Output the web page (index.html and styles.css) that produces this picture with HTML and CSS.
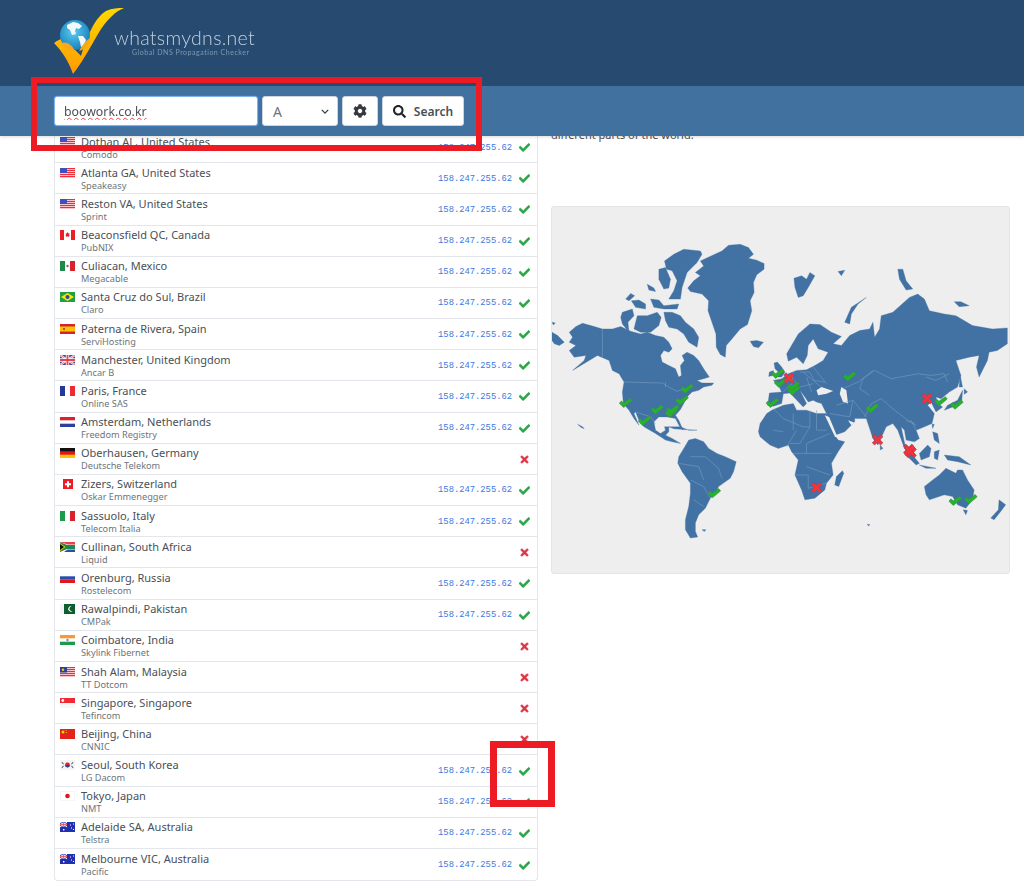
FILE: index.html
```html
<!DOCTYPE html>
<html lang="en">
<head>
<meta charset="utf-8">
<title>whatsmydns.net</title>
<link rel="stylesheet" href="styles.css">
</head>
<body>
<svg class="defs" width="0" height="0" aria-hidden="true">
  <defs>
    <symbol id="check" viewBox="0 0 512 512"><path d="M173.898 439.404l-166.4-166.4c-9.997-9.997-9.997-26.206 0-36.204l36.203-36.204c9.997-9.998 26.207-9.998 36.204 0L192 312.69 432.095 72.596c9.997-9.997 26.207-9.997 36.204 0l36.203 36.204c9.997 9.997 9.997 26.206 0 36.204l-294.4 294.401c-9.998 9.997-26.207 9.997-36.204-.001z"/></symbol>
    <symbol id="times" viewBox="0 0 352 512"><path d="M242.72 256l100.07-100.07c12.28-12.28 12.28-32.19 0-44.48l-22.24-22.24c-12.28-12.28-32.19-12.28-44.48 0L176 189.28 75.93 89.21c-12.28-12.28-32.19-12.28-44.48 0L9.21 111.45c-12.28 12.28-12.28 32.19 0 44.48L109.28 256 9.21 356.07c-12.28 12.28-12.28 32.19 0 44.48l22.24 22.24c12.28 12.28 32.2 12.28 44.48 0L176 322.72l100.07 100.07c12.28 12.28 32.2 12.28 44.48 0l22.24-22.24c12.28-12.28 12.28-32.19 0-44.48L242.72 256z"/></symbol>
    <symbol id="f-us" viewBox="0 0 15 10"><rect width="15" height="10" fill="#fbc4c6"/><path d="M0 0h15v1.1H0zM0 2h15v1.1H0zM0 4h15v1.1H0zM0 6h15v1.1H0zM0 8h15v1.1H0z" fill="#ec2f3a"/><rect width="7" height="5" fill="#3d50c0"/></symbol>
    <symbol id="f-ca" viewBox="0 0 15 10"><rect width="15" height="10" fill="#fff"/><rect width="4" height="10" fill="#ee1c25"/><rect x="11" width="4" height="10" fill="#ee1c25"/><path d="M7.5 2l1 1.6 1-.3-.4 2 .9.3-1.3 1.2-1.1-.2-1.1.2-1.3-1.2.9-.3-.4-2 1 .3z" fill="#ee1c25"/></symbol>
    <symbol id="f-mx" viewBox="0 0 15 10"><rect width="15" height="10" fill="#fff"/><rect width="5" height="10" fill="#1d8a4a"/><rect x="10" width="5" height="10" fill="#d8232e"/><circle cx="7.5" cy="5" r="1.2" fill="#8b6b4a"/></symbol>
    <symbol id="f-br" viewBox="0 0 15 10"><rect width="15" height="10" fill="#229e45"/><path d="M7.5 1L14 5 7.5 9 1 5z" fill="#f8e509"/><circle cx="7.5" cy="5" r="2" fill="#2b49a3"/></symbol>
    <symbol id="f-es" viewBox="0 0 15 10"><rect width="15" height="10" fill="#d8232e"/><rect y="2.5" width="15" height="5" fill="#fbc400"/><rect x="3" y="4" width="2" height="2" fill="#b0552a"/></symbol>
    <symbol id="f-gb" viewBox="0 0 15 10"><rect width="15" height="10" fill="#3a4a9c"/><path d="M0 0l15 10M15 0L0 10" stroke="#fff" stroke-width="2"/><path d="M0 0l15 10M15 0L0 10" stroke="#e8434c" stroke-width=".7"/><path d="M7.5 0v10M0 5h15" stroke="#fff" stroke-width="3.4"/><path d="M7.5 0v10M0 5h15" stroke="#e8434c" stroke-width="1.8"/></symbol>
    <symbol id="f-fr" viewBox="0 0 15 10"><rect width="15" height="10" fill="#fff"/><rect width="5" height="10" fill="#26379b"/><rect x="10" width="5" height="10" fill="#ee2a35"/></symbol>
    <symbol id="f-nl" viewBox="0 0 15 10"><rect width="15" height="10" fill="#fff"/><rect width="15" height="3.3" fill="#d8232e"/><rect y="6.7" width="15" height="3.3" fill="#2b3f9c"/></symbol>
    <symbol id="f-de" viewBox="0 0 15 10"><rect width="15" height="10" fill="#e2171d"/><rect width="15" height="3.3" fill="#111"/><rect y="6.7" width="15" height="3.3" fill="#fbc400"/></symbol>
    <symbol id="f-ch" viewBox="0 0 15 10"><rect x="3" width="10" height="10" fill="#ee1c25"/><path d="M7 2.2h2v2h2v2H9v2H7v-2H5v-2h2z" fill="#fff"/></symbol>
    <symbol id="f-it" viewBox="0 0 15 10"><rect width="15" height="10" fill="#fff"/><rect width="5" height="10" fill="#1d9a4a"/><rect x="10" width="5" height="10" fill="#d8232e"/></symbol>
    <symbol id="f-za" viewBox="0 0 15 10"><rect width="15" height="10" fill="#1d8a4a"/><path d="M0 0h15v3H7zM0 10h15V7H7z" fill="#fff"/><path d="M0 0h15v2.4H7.5z" fill="#e8434c"/><path d="M7.5 7.6H15V10H4z" fill="#2b4fb0"/><path d="M0 1l5.5 4L0 9z" fill="#fbc400"/><path d="M0 2l4 3-4 3z" fill="#111"/></symbol>
    <symbol id="f-ru" viewBox="0 0 15 10"><rect width="15" height="10" fill="#fff" stroke="#eee" stroke-width=".5"/><rect y="3.3" width="15" height="3.4" fill="#2b4fb0"/><rect y="6.7" width="15" height="3.3" fill="#e2171d"/></symbol>
    <symbol id="f-pk" viewBox="0 0 15 10"><rect width="15" height="10" fill="#f4f4f4"/><rect x="4" width="11" height="10" fill="#0b5e2e"/><path d="M11.8 2.6a2.6 2.6 0 1 0 .8 4.2 2.2 2.2 0 1 1-.8-4.2z" fill="#fff"/></symbol>
    <symbol id="f-in" viewBox="0 0 15 10"><rect width="15" height="10" fill="#fff"/><rect width="15" height="3.3" fill="#f79a33"/><rect y="6.7" width="15" height="3.3" fill="#1d9a4a"/><circle cx="7.5" cy="5" r="1.2" fill="#7a86c8"/></symbol>
    <symbol id="f-my" viewBox="0 0 15 10"><rect width="15" height="10" fill="#fbc4c6"/><path d="M0 0h15v1.1H0zM0 2h15v1.1H0zM0 4h15v1.1H0zM0 6h15v1.1H0zM0 8h15v1.1H0z" fill="#ec2f3a"/><rect width="7" height="5.5" fill="#2b3f9c"/><circle cx="3" cy="2.7" r="1.3" fill="#fbc400"/></symbol>
    <symbol id="f-sg" viewBox="0 0 15 10"><rect width="15" height="10" fill="#f7f7f7"/><rect width="15" height="5" fill="#ee2a35"/><circle cx="2.8" cy="2.5" r="1.4" fill="#fff"/></symbol>
    <symbol id="f-cn" viewBox="0 0 15 10"><rect width="15" height="10" fill="#e2231a"/><circle cx="3" cy="3" r="1.5" fill="#fbd400"/><circle cx="6" cy="1.5" r=".5" fill="#fbd400"/><circle cx="6.5" cy="3.5" r=".5" fill="#fbd400"/></symbol>
    <symbol id="f-kr" viewBox="0 0 15 10"><rect width="15" height="10" fill="#f4f4f4"/><circle cx="7.5" cy="5" r="2.4" fill="#d8232e"/><path d="M5.1 5a2.4 2.4 0 0 0 4.8 0z" fill="#2b3f9c"/><path d="M2 2.2l1.5 2M13 2.2l-1.5 2M2 7.8l1.5-2M13 7.8l-1.5-2" stroke="#333" stroke-width="1"/></symbol>
    <symbol id="f-jp" viewBox="0 0 15 10"><rect width="15" height="10" fill="#ececec"/><rect x=".5" y=".5" width="14" height="9" fill="#fff"/><circle cx="7.5" cy="5" r="2.3" fill="#e2171d"/></symbol>
    <symbol id="f-au" viewBox="0 0 15 10"><rect width="15" height="10" fill="#1f2fb0"/><path d="M0 0l7 5M7 0L0 5" stroke="#fff" stroke-width="1"/><path d="M3.5 0v5M0 2.5h7" stroke="#fff" stroke-width="1.6"/><path d="M3.5 0v5M0 2.5h7" stroke="#e8434c" stroke-width=".8"/><path d="M10 2.5h1v1h-1zM13 1.5h1v1h-1zM13 7h1v1h-1zM11 5.5h1v1h-1zM3 7h1.4v1.4H3z" fill="#fff"/></symbol>
    <symbol id="mark-ok" viewBox="0 0 42 32"><path d="M2 17l6-7 7 6L34 2l6 7-25 21z" fill="#20b52b" stroke="#4a8a48" stroke-width="2" stroke-linejoin="round"/></symbol>
    <symbol id="mark-no" viewBox="0 0 36 36"><path d="M9 2l9 9 9-9 7 7-9 9 9 9-7 7-9-9-9 9-7-7 9-9-9-9z" fill="#f5333a" stroke="#8c4a66" stroke-width="2" stroke-linejoin="round"/></symbol>
  </defs>
</svg>

<header class="top">
  <div class="brand">
    <svg class="logo" viewBox="0 0 70 67" aria-hidden="true">
      <defs>
        <linearGradient id="lg-y" x1="0" y1="0" x2="0" y2="1"><stop offset="0" stop-color="#ffd800"/><stop offset="1" stop-color="#ff9a00"/></linearGradient>
        <radialGradient id="lg-b" cx=".45" cy=".4" r=".65"><stop offset="0" stop-color="#5ccbf0"/><stop offset="1" stop-color="#117cb8"/></radialGradient>
      </defs>
      <path d="M19 66C15 54 8 43 0 35c4-3 8-5 11-4 5 7 13 13 16 17C32 32 40 10 52 3c6-3 12-3 18-3-8 3-18 12-26 26C36 40 27 56 19 66z" fill="url(#lg-y)"/>
      <circle cx="21" cy="27" r="15" fill="url(#lg-b)"/>
      <path d="M13 17l6-3 5 1 4 3-3 3-3-1-1 3 1 3-4 1-2-5-3-2zM24 28l5 0 3 4-2 5-3 2-1-5z" fill="#f3f8fb"/>
      <path d="M7 35c5-2 11 1 14 8-6 0-11-3-14-8zM36 30c0 6-6 12-11 13 3-5 6-10 11-13z" fill="#f9a61a"/>
    </svg>
    <div class="brand-text">
      <div class="brand-name">whatsmydns.net</div>
      <div class="brand-sub">Global DNS Propagation Checker</div>
    </div>
  </div>
  <form class="search">
    <input class="field" type="text" value="boowork.co.kr" spellcheck="false">
    <div class="type">A<svg class="chev" viewBox="0 0 10 6" aria-hidden="true"><path d="M1 1l4 4 4-4" fill="none" stroke="#343a40" stroke-width="1.6"/></svg></div>
    <button class="btn gear" type="button" aria-label="Settings"><svg class="ico" viewBox="0 0 512 512"><path d="M487.4 315.7l-42.6-24.6c4.3-23.2 4.3-47 0-70.2l42.6-24.6c4.9-2.8 7.1-8.6 5.5-14-11.1-35.6-30-67.8-54.7-94.6-3.8-4.1-10-5.1-14.8-2.3L380.8 110c-17.9-15.4-38.5-27.3-60.8-35.1V25.8c0-5.6-3.9-10.5-9.4-11.7-36.7-8.2-74.3-7.8-109.2 0-5.5 1.2-9.4 6.1-9.4 11.7V75c-22.2 7.9-42.8 19.8-60.8 35.1L88.7 85.5c-4.9-2.8-11-1.9-14.8 2.3-24.7 26.7-43.6 58.9-54.7 94.6-1.7 5.4.6 11.2 5.5 14L67.3 221c-4.3 23.2-4.3 47 0 70.2l-42.6 24.6c-4.9 2.8-7.1 8.6-5.5 14 11.1 35.6 30 67.8 54.7 94.6 3.8 4.1 10 5.1 14.8 2.3l42.6-24.6c17.9 15.4 38.5 27.3 60.8 35.1v49.2c0 5.6 3.9 10.5 9.4 11.7 36.7 8.2 74.3 7.8 109.2 0 5.5-1.2 9.4-6.1 9.4-11.7v-49.2c22.2-7.9 42.8-19.8 60.8-35.1l42.6 24.6c4.9 2.8 11 1.9 14.8-2.3 24.7-26.7 43.6-58.9 54.7-94.6 1.5-5.5-.7-11.3-5.6-14.1zM256 336c-44.1 0-80-35.9-80-80s35.9-80 80-80 80 35.9 80 80-35.9 80-80 80z"/></svg></button>
    <button class="btn go" type="button"><svg class="ico" viewBox="0 0 512 512"><path d="M505 442.7L405.3 343c-4.5-4.5-10.6-7-17-7H372c27.6-35.3 44-79.7 44-128C416 93.1 322.9 0 208 0S0 93.1 0 208s93.1 208 208 208c48.3 0 92.7-16.4 128-44v16.3c0 6.4 2.5 12.5 7 17l99.7 99.7c9.4 9.4 24.6 9.4 33.9 0l28.3-28.3c9.4-9.4 9.4-24.6.1-34zM208 336c-70.7 0-128-57.2-128-128 0-70.7 57.2-128 128-128 70.7 0 128 57.2 128 128 0 70.7-57.2 128-128 128z"/></svg>Search</button>
  </form>
</header>

<main class="page">
  <ul class="results">
    <li class="row"><svg class="flag"><use href="#f-us"/></svg><div class="place"><div class="city">Dothan AL, United States</div><div class="isp">Comodo</div></div><span class="ip">158.247.255.62</span><svg class="st ok"><use href="#check"/></svg></li>
    <li class="row"><svg class="flag"><use href="#f-us"/></svg><div class="place"><div class="city">Atlanta GA, United States</div><div class="isp">Speakeasy</div></div><span class="ip">158.247.255.62</span><svg class="st ok"><use href="#check"/></svg></li>
    <li class="row"><svg class="flag"><use href="#f-us"/></svg><div class="place"><div class="city">Reston VA, United States</div><div class="isp">Sprint</div></div><span class="ip">158.247.255.62</span><svg class="st ok"><use href="#check"/></svg></li>
    <li class="row"><svg class="flag"><use href="#f-ca"/></svg><div class="place"><div class="city">Beaconsfield QC, Canada</div><div class="isp">PubNIX</div></div><span class="ip">158.247.255.62</span><svg class="st ok"><use href="#check"/></svg></li>
    <li class="row"><svg class="flag"><use href="#f-mx"/></svg><div class="place"><div class="city">Culiacan, Mexico</div><div class="isp">Megacable</div></div><span class="ip">158.247.255.62</span><svg class="st ok"><use href="#check"/></svg></li>
    <li class="row"><svg class="flag"><use href="#f-br"/></svg><div class="place"><div class="city">Santa Cruz do Sul, Brazil</div><div class="isp">Claro</div></div><span class="ip">158.247.255.62</span><svg class="st ok"><use href="#check"/></svg></li>
    <li class="row"><svg class="flag"><use href="#f-es"/></svg><div class="place"><div class="city">Paterna de Rivera, Spain</div><div class="isp">ServiHosting</div></div><span class="ip">158.247.255.62</span><svg class="st ok"><use href="#check"/></svg></li>
    <li class="row"><svg class="flag"><use href="#f-gb"/></svg><div class="place"><div class="city">Manchester, United Kingdom</div><div class="isp">Ancar B</div></div><span class="ip">158.247.255.62</span><svg class="st ok"><use href="#check"/></svg></li>
    <li class="row"><svg class="flag"><use href="#f-fr"/></svg><div class="place"><div class="city">Paris, France</div><div class="isp">Online SAS</div></div><span class="ip">158.247.255.62</span><svg class="st ok"><use href="#check"/></svg></li>
    <li class="row"><svg class="flag"><use href="#f-nl"/></svg><div class="place"><div class="city">Amsterdam, Netherlands</div><div class="isp">Freedom Registry</div></div><span class="ip">158.247.255.62</span><svg class="st ok"><use href="#check"/></svg></li>
    <li class="row"><svg class="flag"><use href="#f-de"/></svg><div class="place"><div class="city">Oberhausen, Germany</div><div class="isp">Deutsche Telekom</div></div><svg class="st no"><use href="#times"/></svg></li>
    <li class="row"><svg class="flag"><use href="#f-ch"/></svg><div class="place"><div class="city">Zizers, Switzerland</div><div class="isp">Oskar Emmenegger</div></div><span class="ip">158.247.255.62</span><svg class="st ok"><use href="#check"/></svg></li>
    <li class="row"><svg class="flag"><use href="#f-it"/></svg><div class="place"><div class="city">Sassuolo, Italy</div><div class="isp">Telecom Italia</div></div><span class="ip">158.247.255.62</span><svg class="st ok"><use href="#check"/></svg></li>
    <li class="row"><svg class="flag"><use href="#f-za"/></svg><div class="place"><div class="city">Cullinan, South Africa</div><div class="isp">Liquid</div></div><svg class="st no"><use href="#times"/></svg></li>
    <li class="row"><svg class="flag"><use href="#f-ru"/></svg><div class="place"><div class="city">Orenburg, Russia</div><div class="isp">Rostelecom</div></div><span class="ip">158.247.255.62</span><svg class="st ok"><use href="#check"/></svg></li>
    <li class="row"><svg class="flag"><use href="#f-pk"/></svg><div class="place"><div class="city">Rawalpindi, Pakistan</div><div class="isp">CMPak</div></div><span class="ip">158.247.255.62</span><svg class="st ok"><use href="#check"/></svg></li>
    <li class="row"><svg class="flag"><use href="#f-in"/></svg><div class="place"><div class="city">Coimbatore, India</div><div class="isp">Skylink Fibernet</div></div><svg class="st no"><use href="#times"/></svg></li>
    <li class="row"><svg class="flag"><use href="#f-my"/></svg><div class="place"><div class="city">Shah Alam, Malaysia</div><div class="isp">TT Dotcom</div></div><svg class="st no"><use href="#times"/></svg></li>
    <li class="row"><svg class="flag"><use href="#f-sg"/></svg><div class="place"><div class="city">Singapore, Singapore</div><div class="isp">Tefincom</div></div><svg class="st no"><use href="#times"/></svg></li>
    <li class="row"><svg class="flag"><use href="#f-cn"/></svg><div class="place"><div class="city">Beijing, China</div><div class="isp">CNNIC</div></div><svg class="st no"><use href="#times"/></svg></li>
    <li class="row"><svg class="flag"><use href="#f-kr"/></svg><div class="place"><div class="city">Seoul, South Korea</div><div class="isp">LG Dacom</div></div><span class="ip">158.247.255.62</span><svg class="st ok"><use href="#check"/></svg></li>
    <li class="row"><svg class="flag"><use href="#f-jp"/></svg><div class="place"><div class="city">Tokyo, Japan</div><div class="isp">NMT</div></div><span class="ip">158.247.255.62</span><svg class="st ok"><use href="#check"/></svg></li>
    <li class="row"><svg class="flag"><use href="#f-au"/></svg><div class="place"><div class="city">Adelaide SA, Australia</div><div class="isp">Telstra</div></div><span class="ip">158.247.255.62</span><svg class="st ok"><use href="#check"/></svg></li>
    <li class="row"><svg class="flag"><use href="#f-au"/></svg><div class="place"><div class="city">Melbourne VIC, Australia</div><div class="isp">Pacific</div></div><span class="ip">158.247.255.62</span><svg class="st ok"><use href="#check"/></svg></li>
  </ul>
  <section class="side">
    <p class="intro">different parts of the world.</p>
    <div class="map-panel">
      <svg class="map" viewBox="33 18 1377 1102" aria-label="World map">
        <g class="land">
          <polygon points="545,150 565,133 600,130 625,140 640,160 625,172 650,178 672,188 672,205 650,222 640,245 642,275 630,300 635,330 622,372 600,385 575,415 558,435 555,470 540,462 528,440 527,400 515,365 503,330 505,300 485,280 450,272 442,262 460,240 480,225 465,215 490,195 480,180"/>
          <polygon points="85,395 105,378 125,368 150,375 185,385 215,385 240,378 270,392 300,400 320,395 345,405 370,410 385,425 395,445 385,455 370,450 360,465 365,485 385,495 405,505 415,530 423,525 420,495 432,480 425,465 440,455 460,465 475,480 490,505 507,530 490,535 470,540 485,548 520,548 515,555 490,560 475,570 455,575 440,590 430,610 420,628 405,645 415,660 428,690 418,680 405,655 380,650 355,650 340,665 345,690 360,700 375,690 372,680 385,680 385,695 375,705 395,715 420,730 410,728 395,725 375,720 345,700 310,680 295,660 285,635 280,640 295,675 280,655 265,630 248,610 245,575 250,545 235,520 215,510 205,480 170,465 145,480 95,510 130,480 135,465 100,470 85,450 105,435 85,425 95,410"/>
          <polygon points="33,395 50,405 70,425 55,435 40,430 33,420"/>
          <polygon points="33,365 43,367 37,373"/>
          <polygon points="245,335 275,325 280,345 262,365 265,395 245,370 240,350"/>
          <polygon points="255,295 270,278 282,285 265,300"/>
          <polygon points="272,300 295,298 315,310 315,325 285,320"/>
          <polygon points="320,250 340,262 345,272 325,268"/>
          <polygon points="330,295 355,298 370,315 415,310 410,325 370,325 340,320"/>
          <polygon points="355,205 375,200 390,235 385,262 370,265 355,235"/>
          <polygon points="372,180 400,160 430,145 480,150 485,160 470,185 440,215 425,260 420,295 385,295 400,270 410,240 395,210 378,205"/>
          <polygon points="370,335 395,335 420,345 435,365 460,385 475,410 470,440 445,425 430,400 410,385 385,380 375,360"/>
          <polygon points="290,345 320,345 350,335 362,350 355,375 330,395 300,395 280,385"/>
          <polygon points="415,770 430,745 445,720 465,715 490,725 505,745 530,760 555,770 588,785 580,815 570,835 535,860 525,880 510,895 495,925 475,945 465,970 465,995 472,1012 450,1015 435,990 435,960 445,920 450,880 450,850 425,815 412,790"/>
          <polygon points="385,680 420,680 445,690 470,690 430,688 400,686"/>
          <polygon points="660,670 680,640 695,630 730,615 760,610 770,630 800,630 830,640 860,640 880,695 895,720 915,725 895,755 875,790 880,825 860,850 855,870 825,895 795,900 785,870 765,825 775,780 755,755 745,735 715,745 690,735 660,710 655,695"/>
          <polygon points="908,812 912,820 897,860 885,855 890,830"/>
          <polygon points="683,615 688,578 725,575 715,555 700,540 725,535 745,520 770,510 800,508 825,495 850,480 865,455 835,445 820,415 805,435 802,465 790,490 770,470 745,482 740,460 775,400 810,370 840,372 875,395 905,408 880,430 905,435 930,405 960,390 990,385 1000,365 1005,410 1020,385 1025,345 1060,335 1110,290 1135,280 1155,295 1170,330 1215,340 1250,345 1300,375 1360,385 1405,382 1405,430 1375,450 1350,455 1345,480 1320,530 1312,500 1320,465 1290,470 1250,480 1265,525 1255,560 1230,575 1205,595 1190,590 1195,610 1210,620 1190,635 1175,605 1165,615 1185,640 1178,670 1155,680 1130,690 1140,715 1125,725 1100,720 1095,690 1085,680 1100,750 1115,765 1095,745 1075,690 1060,670 1040,680 1015,735 1000,715 980,655 945,655 945,665 915,695 885,705 860,640 845,610 830,605 820,600 805,605 795,590 780,570 800,610 790,620 750,578 730,580 725,610 700,618"/>
          <polygon points="915,365 935,320 980,290 955,310 935,340 930,370"/>
          <polygon points="1075,205 1090,205 1100,240 1120,265 1100,268 1080,235"/>
          <polygon points="762,232 785,225 800,235 810,215 825,225 805,260 790,285 775,290 765,260"/>
          <polygon points="895,212 915,208 905,225"/>
          <polygon points="630,422 650,420 670,425 655,442 640,438"/>
          <polygon points="1245,303 1265,303 1290,315 1260,318"/>
          <polygon points="702,488 712,485 725,500 735,515 725,530 705,530 715,515 705,505"/>
          <polygon points="688,515 700,510 698,525 686,528"/>
          <polygon points="1262,520 1270,560 1260,560"/>
          <polygon points="1270,570 1268,600 1240,620 1215,630 1225,615 1255,600"/>
          <polygon points="1275,565 1285,575 1275,582"/>
          <polygon points="1095,738 1115,760 1140,790 1130,795 1105,770"/>
          <polygon points="1140,795 1190,805 1160,805"/>
          <polygon points="1140,760 1165,735 1175,745 1170,770 1145,780"/>
          <polygon points="1185,755 1200,750 1195,780 1185,775"/>
          <polygon points="1215,765 1260,770 1295,795 1255,785 1225,780"/>
          <polygon points="1180,695 1195,700 1200,730 1185,720"/>
          <polygon points="1178,672 1185,672 1180,685"/>
          <polygon points="1022,735 1030,745 1022,750"/>
          <polygon points="1155,860 1180,840 1200,825 1220,805 1250,820 1255,810 1270,810 1285,840 1305,870 1300,900 1280,925 1255,915 1240,890 1215,885 1170,900 1160,885"/>
          <polygon points="1272,930 1285,932 1280,945"/>
          <polygon points="1380,900 1400,915 1385,935 1365,960 1355,955 1378,930"/>
          <polygon points="485,990 497,990 492,995"/>
          <polygon points="982,974 990,974 988,979"/>
          <polygon points="110,672 125,680 130,686 120,681"/>
        </g>
        <g class="lakes">
          <polygon points="830,570 845,560 880,572 860,580 835,585"/>
          <polygon points="905,560 920,570 925,610 910,605 900,580"/>
          <polygon points="855,645 868,650 895,715 885,708"/>
          <polygon points="925,660 945,668 935,675"/>
        </g>
        <path class="borders" d="M185 385v85M250 545l115 3 25 15 20 10 30-10M285 635l45 15 15 20M375 560v-15M700 625l30 30 60 25 20 0 0-50M830 630l0 60 30 0M810 680l-30 50-30 0M770 690l-30 50M870 700l-70 30 0 30-40 0M800 760l75 0M765 825l40 0 0 40M800 800l70 25M805 865l55-15M760 640l0 50M700 690l30 5M450 770l45 0 40 35 10 30M450 840l40 20 20 35M415 790l60 10 15 40M460 900l30 20M845 560l-20-15-15-30-30 0M745 520l30 35M800 530l15 45M820 500l40 50M780 560l40-10M760 515l-5 40M790 515l30 25 35 5M730 575l25-25M910 565l45-20 50-35 50 25 80-15 40 5 40-5 10 25M1000 510l-30 25-10 30 30 20M975 650l20-40 30-15 40 35 40 30 20 10M1100 660l30 15M1130 690l-15-30M940 600l40 50M890 615l50-15M870 640l60 10 10-50M1230 520l-40 20-30-10"/>
        <g class="marks">
          <use href="#mark-ok" x="234" y="592" width="42" height="32"/>
          <use href="#mark-ok" x="329" y="612" width="42" height="32"/>
          <use href="#mark-ok" x="291" y="646" width="42" height="32"/>
          <use href="#mark-ok" x="372" y="621" width="42" height="32"/>
          <use href="#mark-ok" x="376" y="612" width="42" height="32"/>
          <use href="#mark-ok" x="404" y="584" width="42" height="32"/>
          <use href="#mark-ok" x="419" y="549" width="42" height="32"/>
          <use href="#mark-ok" x="501" y="864" width="42" height="32"/>
          <use href="#mark-ok" x="676" y="592" width="42" height="32"/>
          <use href="#mark-ok" x="692" y="504" width="42" height="32"/>
          <use href="#mark-ok" x="701" y="531" width="42" height="32"/>
          <use href="#mark-ok" x="739" y="542" width="42" height="32"/>
          <use href="#mark-ok" x="741" y="554" width="42" height="32"/>
          <use href="#mark-ok" x="909" y="512" width="42" height="32"/>
          <use href="#mark-ok" x="977" y="608" width="42" height="32"/>
          <use href="#mark-ok" x="1184" y="587" width="42" height="32"/>
          <use href="#mark-ok" x="1232" y="597" width="42" height="32"/>
          <use href="#mark-ok" x="1227" y="887" width="42" height="32"/>
          <use href="#mark-ok" x="1274" y="882" width="42" height="32"/>
          <use href="#mark-no" x="729" y="515" width="36" height="36"/>
          <use href="#mark-no" x="1145" y="577" width="36" height="36"/>
          <use href="#mark-no" x="996" y="701" width="36" height="36"/>
          <use href="#mark-no" x="1090" y="730" width="36" height="36"/>
          <use href="#mark-no" x="1097" y="739" width="36" height="36"/>
          <use href="#mark-no" x="1092" y="734" width="36" height="36"/>
          <use href="#mark-no" x="812" y="845" width="36" height="36"/>
        </g>
      </svg>
    </div>
  </section>
</main>

<div class="callout callout-form"></div>
<div class="callout callout-status"></div>
</body>
</html>
```

FILE: styles.css
```css
* { box-sizing: border-box; }
html, body { margin: 0; padding: 0; }
body {
  height: 896px;
  overflow: hidden;
  background: #fff;
  font-family: "Noto Sans", "Noto Sans CJK KR", sans-serif;
  color: #495057;
}
.defs { display: block; width: 0; height: 0; }

.top {
  position: fixed;
  top: 0;
  left: 0;
  right: 0;
  z-index: 5;
  height: 136px;
  display: flex;
  flex-direction: column;
  background: #41719f;
  box-shadow: 0 1px 3px rgba(0,0,0,.15);
}
.brand {
  height: 86px;
  flex: none;
  display: flex;
  align-items: flex-start;
  padding: 8px 0 0 54px;
  background: #274b70;
}
.logo { width: 70px; height: 67px; flex: none; }
.brand-text { margin: 17px 0 0 -10px; color: #c3d0dc; }
.brand-name {
  font: 300 19.5px/26px Lato, sans-serif;
  letter-spacing: .3px;
}
.brand-sub {
  margin: -4px 0 0 18px;
  font: 400 7px/10px Lato, sans-serif;
  letter-spacing: .52px;
  color: #7f98b1;
}
.search {
  display: flex;
  gap: 4px;
  padding: 10px 0 0 54px;
}
.field, .type, .btn {
  height: 30px;
  background: #fff;
  border: 1px solid #ced4da;
  border-radius: 3px;
  font-family: "Noto Sans", sans-serif;
}
.field {
  width: 204px;
  padding: 0 9px;
  font-size: 12.3px;
  color: #495057;
  outline: none;
  border-color: #7fb0ea;
  box-shadow: 0 0 0 1px rgba(60,130,220,.45);
  text-decoration: underline wavy #e8434c 1px;
}
.type {
  width: 76px;
  display: flex;
  align-items: center;
  justify-content: space-between;
  padding: 0 8px 0 10px;
  font-size: 14px;
  color: #6c757d;
}
.chev { width: 8px; height: 5px; }
.btn {
  display: flex;
  align-items: center;
  justify-content: center;
  gap: 8px;
  padding: 0;
  font-size: 12px;
  font-weight: 600;
  color: #495057;
}
.gear { width: 36px; }
.go { width: 82px; }
.ico { width: 13px; height: 13px; fill: #212529; flex: none; }
.gear .ico { width: 14px; height: 14px; fill: #343a40; }

.page {
  display: flex;
  align-items: flex-start;
  gap: 13px;
  padding: 132px 0 0 54px;
}
.results {
  width: 484px;
  flex: none;
  list-style: none;
  margin: 0;
  padding: 0;
  border: 1px solid #e3e6ea;
  border-top: 0;
  border-radius: 0 0 4px 4px;
}
.row {
  height: 31.18px;
  display: flex;
  align-items: center;
  padding: 1px 7px 0 5px;
  border-bottom: 1px solid #e3e6ea;
}
.row:last-child { border-bottom: 0; }
.flag { width: 15px; height: 10px; flex: none; margin: -12px 6px 0 0; }
.place { flex: 1; min-width: 0; }
.city { font-size: 11px; line-height: 13px; color: #495057; }
.isp { font-size: 9.2px; line-height: 13px; color: #6c757d; }
.ip {
  font: 8.8px/12px "Liberation Mono", monospace;
  color: #3c78e0;
  margin-right: 7px;
}
.st { width: 11px; height: 11px; flex: none; stroke-width: 24px; }
.ok { fill: #28a745; stroke: #28a745; }
.no { fill: #dc3545; stroke: #dc3545; }

.side { width: 459px; flex: none; }
.intro {
  margin: -2px 0 0;
  height: 76px;
  font-size: 11px;
  line-height: 10px;
  color: #495057;
}
.map-panel {
  height: 368px;
  background: #eee;
  border: 1px solid #e4e4e4;
  border-radius: 3px;
  overflow: hidden;
}
.map { display: block; width: 100%; height: 100%; }
.land { fill: #4272a4; stroke: #4272a4; stroke-width: 1; stroke-linejoin: round; }
.lakes { fill: #eee; }
.borders { fill: none; stroke: #7d9fc4; stroke-width: 1.6; }

.callout {
  position: fixed;
  z-index: 10;
  border-style: solid;
  border-color: #ed1c24;
  pointer-events: none;
}
.callout-form { left: 31px; top: 77px; width: 451px; height: 74px; border-width: 6px; }
.callout-status { left: 490px; top: 741px; width: 65px; height: 66px; border-width: 7px; }
```
